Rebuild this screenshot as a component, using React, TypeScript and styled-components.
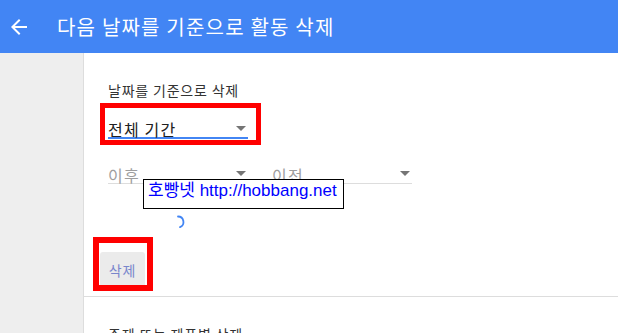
import styled, { createGlobalStyle } from "styled-components";

const GlobalStyle = createGlobalStyle`
  html, body {
    margin: 0;
    padding: 0;
    background: #ffffff;
  }
  body {
    font-family: "Noto Sans CJK KR", "Liberation Sans", sans-serif;
    color: #212121;
  }
`;

interface SelectProps {
  label: string;
  active?: boolean;
}

function Select({ label, active }: SelectProps) {
  return (
    <SelectStyle active={active}>
      <span className="label">{label}</span>
      <span className="arrow" />
    </SelectStyle>
  );
}

function Spinner() {
  return (
    <svg width="20" height="20" viewBox="0 0 20 20">
      <path
        d="M10 4.5 A5.5 5.5 0 0 1 12 15.1"
        fill="none"
        stroke="#4285f4"
        strokeWidth="1.8"
        strokeLinecap="round"
      />
    </svg>
  );
}

function App() {
  return (
    <>
      <GlobalStyle />
      <Page>
        <Header>
          <BackButton>
            <svg width="24" height="24" viewBox="0 0 24 24">
              <path
                fill="#ffffff"
                d="M20 11H7.83l5.59-5.59L12 4l-8 8 8 8 1.41-1.41L7.83 13H20v-2z"
              />
            </svg>
          </BackButton>
          <Title>다음 날짜를 기준으로 활동 삭제</Title>
        </Header>
        <Body>
          <Sidebar />
          <Content>
            <Section>
              <SectionTitle>날짜를 기준으로 삭제</SectionTitle>
              <SelectRow first>
                <Annotated>
                  <Select label="전체 기간" active />
                  <Highlight left={-8} top={-6} width={161} height={42} thick={5} />
                </Annotated>
              </SelectRow>
              <SelectRow>
                <Select label="이후" />
                <Select label="이전" />
                <Tooltip>호빵넷 http://hobbang.net</Tooltip>
              </SelectRow>
              <SpinnerRow>
                <Spinner />
              </SpinnerRow>
              <ButtonWrap>
                <FlatButton>삭제</FlatButton>
                <Highlight left={-7} top={-15} width={60} height={54} thick={6} />
              </ButtonWrap>
            </Section>
            <Section>
              <SectionTitle>주제 또는 제품별 삭제</SectionTitle>
            </Section>
          </Content>
        </Body>
      </Page>
    </>
  );
}

const Page = styled.div`
  display: flex;
  flex-direction: column;
  height: 100vh;
  overflow: hidden;
`;

const Header = styled.header`
  flex: 0 0 53px;
  display: flex;
  align-items: center;
  padding-left: 7px;
  background-color: #4285f4;
  color: #ffffff;
`;

const BackButton = styled.div`
  width: 24px;
  height: 24px;
  svg {
    display: block;
  }
`;

const Title = styled.h1`
  margin: 0 0 0 26px;
  font-size: 20px;
  font-weight: 400;
  line-height: 24px;
  letter-spacing: 1.2px;
  color: #ffffff;
`;

const Body = styled.div`
  flex: 1;
  display: flex;
  min-height: 0;
`;

const Sidebar = styled.aside`
  width: 83px;
  flex-shrink: 0;
  background-color: #eeeeee;
  border-right: 1px solid #dddddd;
`;

const Content = styled.main`
  flex: 1;
  display: flex;
  flex-direction: column;
`;

const Section = styled.section`
  padding: 27px 24px 8px;
  border-bottom: 1px solid #dddddd;
`;

const SectionTitle = styled.h2`
  margin: 0;
  font-size: 14px;
  font-weight: 400;
  line-height: 20px;
  letter-spacing: 0.8px;
  color: #333333;
`;

const SelectRow = styled.div<{ first?: boolean }>`
  position: relative;
  display: flex;
  gap: 24px;
  margin-top: ${({ first }) => (first ? "9px" : "15px")};
`;

const Annotated = styled.div`
  position: relative;
`;

const ButtonWrap = styled.div`
  position: relative;
  width: 45px;
  margin: 20px 0 0 -8px;
`;

const SelectStyle = styled.div<{ active?: boolean }>`
  width: 140px;
  height: 30px;
  box-sizing: border-box;
  display: flex;
  align-items: flex-end;
  border-bottom: ${({ active }) =>
    active ? "2px solid #4285f4" : "1px solid #dddddd"};
  .label {
    flex: 1;
    font-size: 16px;
    line-height: 16px;
    letter-spacing: 1.2px;
    color: ${({ active }) => (active ? "#212121" : "#9e9e9e")};
  }
  .arrow {
    width: 0;
    height: 0;
    margin: 0 2px ${({ active }) => (active ? "6px" : "7px")} 0;
    border-left: 5px solid transparent;
    border-right: 5px solid transparent;
    border-top: 5px solid #757575;
  }
`;

const Highlight = styled.div<{
  left: number;
  top: number;
  width: number;
  height: number;
  thick: number;
}>`
  position: absolute;
  left: ${({ left }) => left}px;
  top: ${({ top }) => top}px;
  width: ${({ width }) => width}px;
  height: ${({ height }) => height}px;
  box-sizing: border-box;
  border: ${({ thick }) => thick}px solid #ff0000;
  pointer-events: none;
`;

const Tooltip = styled.div`
  position: absolute;
  left: 35px;
  top: 25px;
  width: 201px;
  height: 30px;
  box-sizing: border-box;
  padding: 1px 0 0 4px;
  border: 1px solid #000000;
  background: #ffffff;
  font-family: "Liberation Sans", "Noto Sans CJK KR", sans-serif;
  font-size: 17px;
  line-height: 20px;
  color: #0000ff;
  white-space: nowrap;
`;

const SpinnerRow = styled.div`
  width: 140px;
  display: flex;
  justify-content: center;
  margin-top: 28px;
  svg {
    display: block;
  }
`;

const FlatButton = styled.button`
  display: flex;
  align-items: center;
  justify-content: center;
  width: 45px;
  height: 36px;
  padding: 0;
  border: none;
  border-radius: 3px;
  background-color: #ebebeb;
  font-family: "Noto Sans CJK KR", sans-serif;
  font-size: 14px;
  letter-spacing: 0.8px;
  color: #7986cb;
`;

export default App;
